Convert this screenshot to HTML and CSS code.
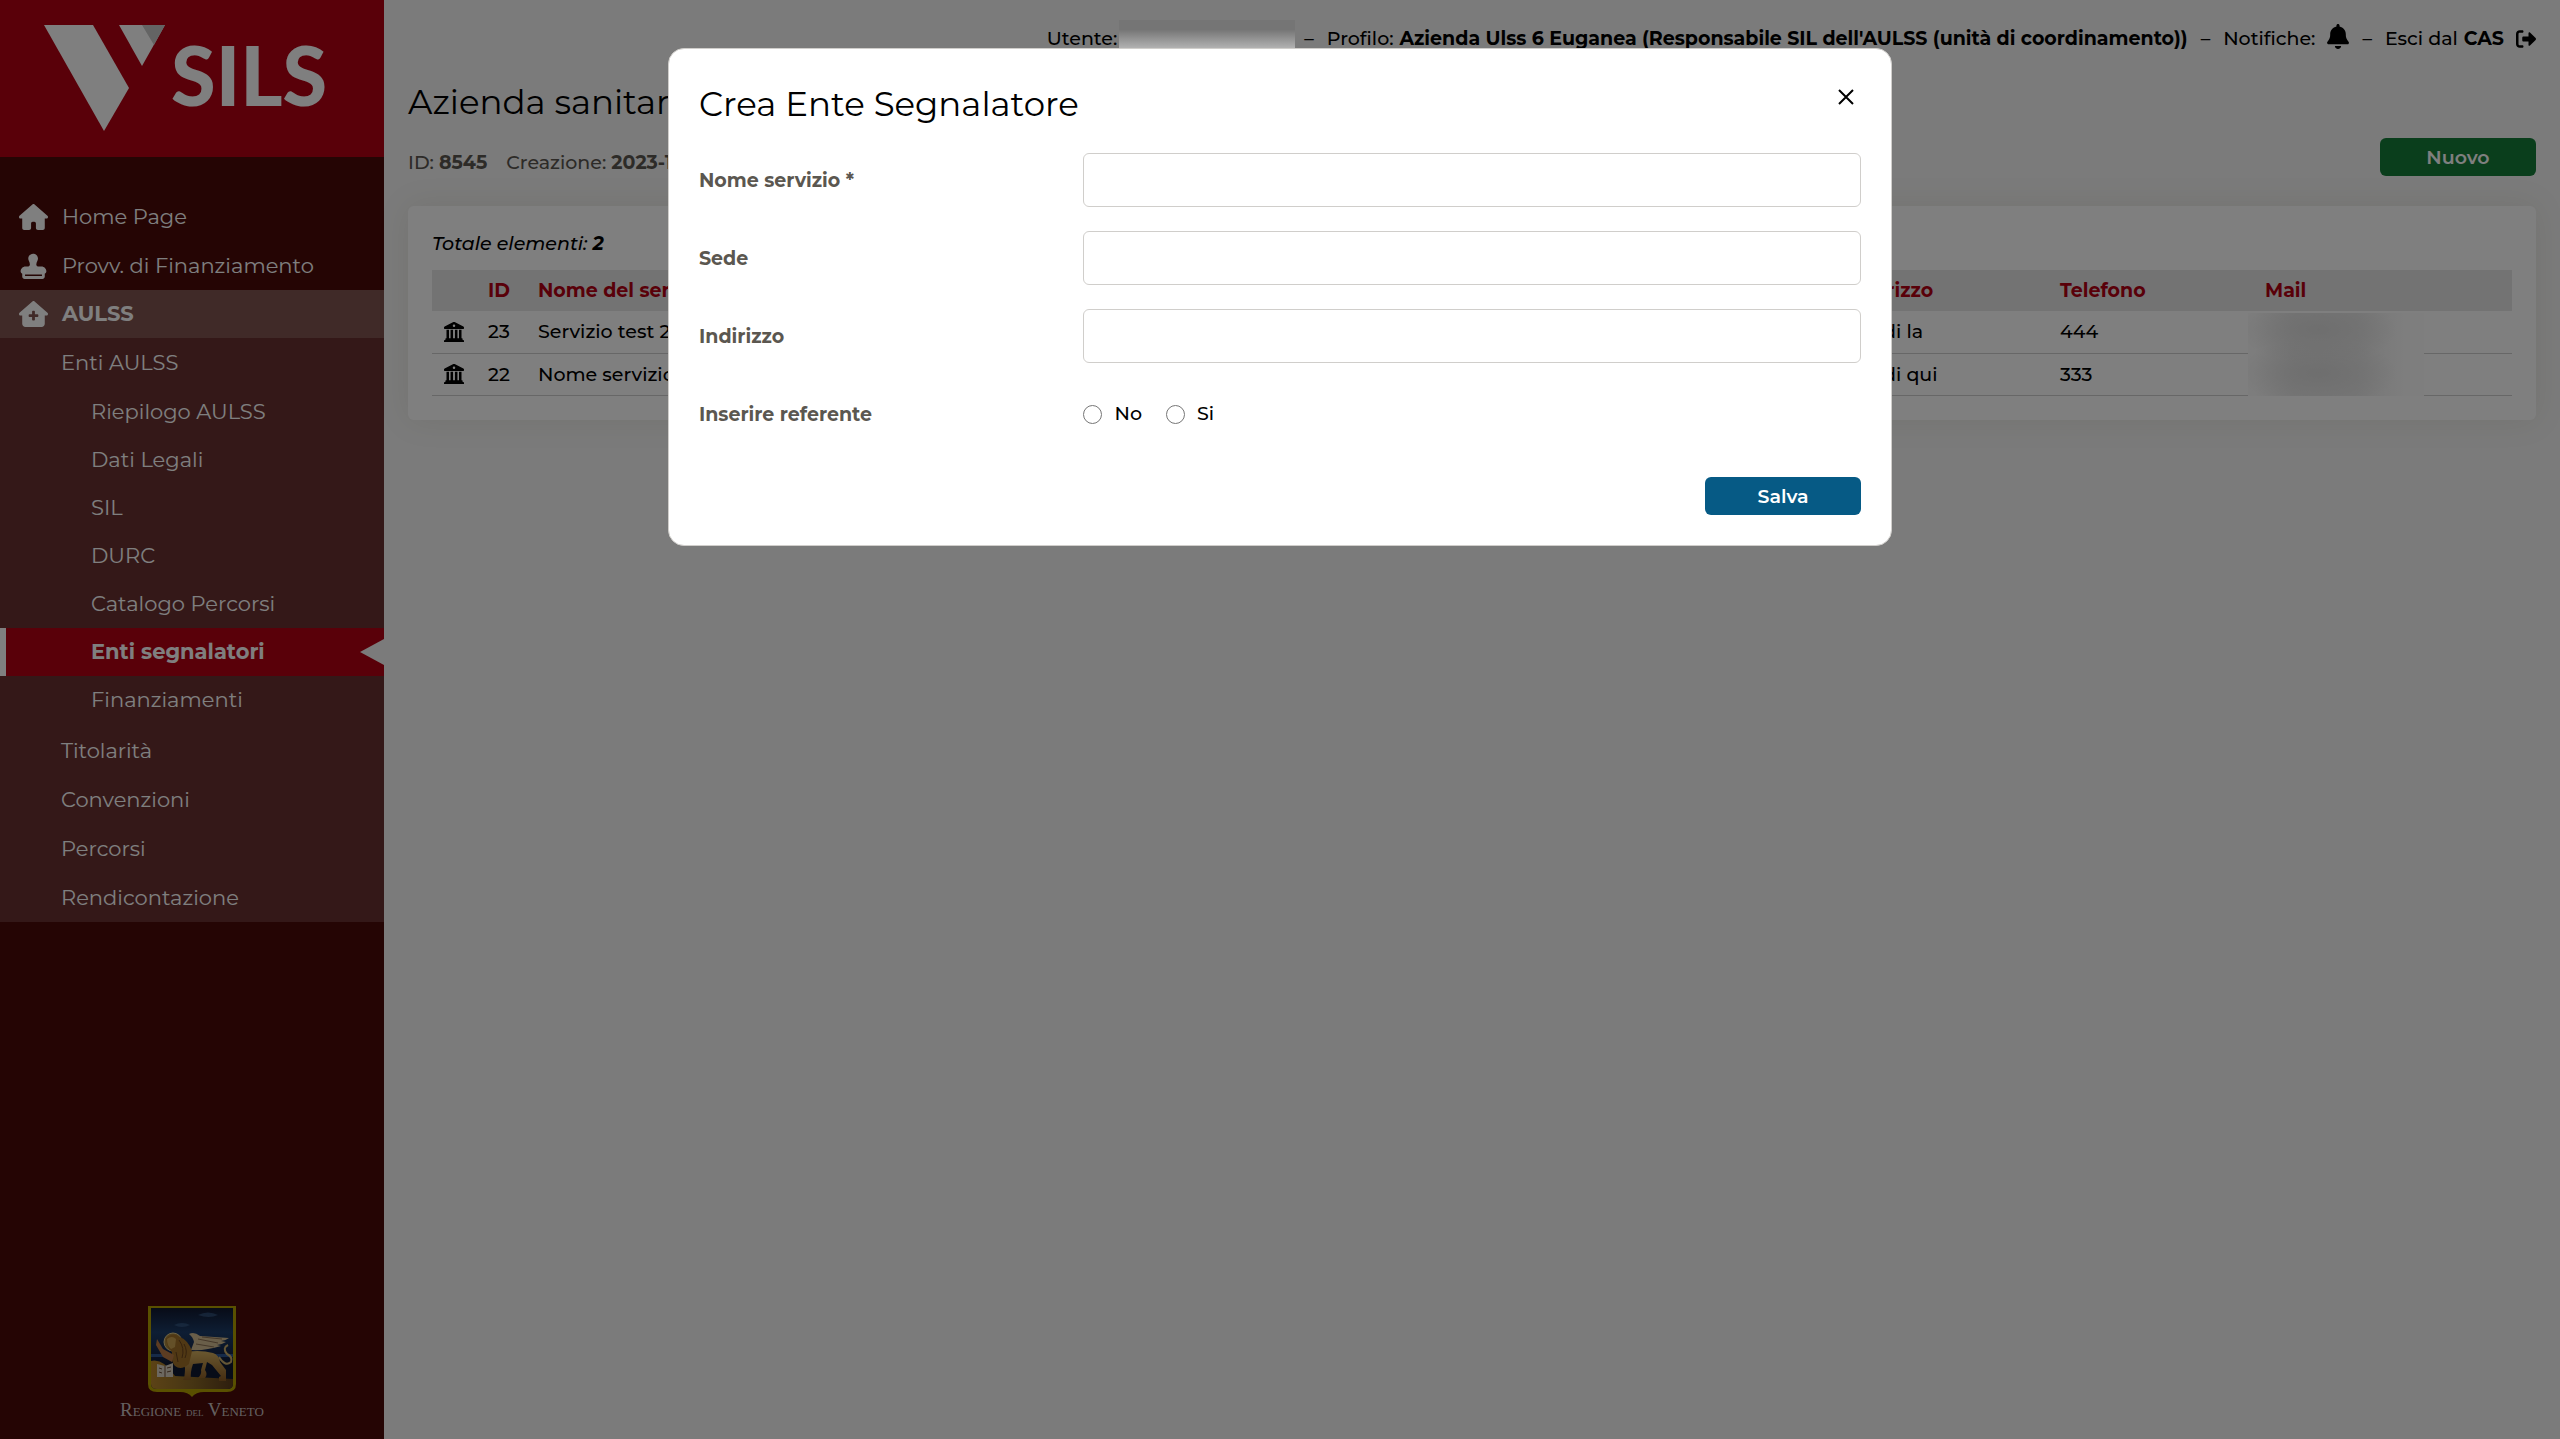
FILE: index.html
```html
<!DOCTYPE html>
<html lang="it">
<head>
    <meta charset="UTF-8">
    <meta name="viewport" content="width=device-width, initial-scale=1.0">
    <title>SILS - Enti segnalatori</title>
    <link rel="stylesheet" href="styles.css">
</head>
<body>
<div class="page">
  <aside class="sidebar">
    <a class="brand" href="#" aria-label="SILS">
      <svg class="brand-mark" viewBox="0 0 122 106" aria-hidden="true">
        <path fill="#fff" d="M0 0h49l36 63-25 43z"/>
        <path fill="#fff" d="M75 0h46L98 41z"/>
        <path fill="#c8c8c8" d="M98 0h23l-11 20z"/>
      </svg>
      <span class="brand-name">SILS</span>
    </a>

    <nav class="menu">
      <a class="menu-item" href="#">
        <svg class="menu-icon" viewBox="0 0 576 512"><path d="M575.8 255.500c0 18-15 32.100-32 32.100h-32l.7 160.200c0 2.700-.2 5.400-.5 8.100V472c0 22.100-17.900 40-40 40H376c-22.100 0-40-17.900-40-40V384c0-17.700-14.300-32-32-32h-32c-17.700 0-32 14.300-32 32v88c0 22.100-17.900 40-40 40h-97c-22 0-39-18-39-40V287.600H32c-18 0-32-14-32-32.100 0-9 3-17 10-24L266.400 8c7-7 15-8 22-8s15 2 21 7L564.800 231.500c8 7 12 15 11 24z"/></svg>
        Home Page
      </a>
      <a class="menu-item" href="#">
        <svg class="menu-icon" viewBox="0 0 576 512"><path d="M344 226c0-25 8-49 20-71a91 91 0 0 0 12-59c-5-42-38-77-80-84-59-10-112 36-112 95 0 18 5 34 13 48 12 22 19 46 19 71v6c0 16-13 32-32 32h-56C77 264 32 309 32 360c0 22 13 40 32 48v56c0 26 22 48 48 48h352c26 0 48-22 48-48v-56c19-8 32-26 32-48 0-51-45-96-96-96h-72c-19 0-32-16-32-32zM120 424h336v32H120z"/></svg>
        Provv. di Finanziamento
      </a>
      <a class="menu-item open" href="#">
        <svg class="menu-icon" viewBox="0 0 576 512"><path fill-rule="evenodd" d="M575.8 255.500c0 18-15 32.100-32 32.100h-32V448c0 35-28 64-64 64H128c-35 0-64-29-64-64V287.600H32c-18 0-32-14-32-32.100 0-9 3-17 10-24L266.400 8c7-7 15-8 22-8s15 2 21 7L564.800 231.500c8 7 12 15 11 24zM260 208v52h-52c-9 0-16 7-16 16v24c0 9 7 16 16 16h52v52c0 9 7 16 16 16h24c9 0 16-7 16-16v-52h52c9 0 16-7 16-16v-24c0-9-7-16-16-16h-52v-52c0-9-7-16-16-16h-24c-9 0-16 7-16 16z"/></svg>
        AULSS
      </a>
      <div class="submenu">
        <a class="sub-item" href="#">Enti AULSS</a>
        <div class="submenu-inner">
          <a class="inner-item" href="#">Riepilogo AULSS</a>
          <a class="inner-item" href="#">Dati Legali</a>
          <a class="inner-item" href="#">SIL</a>
          <a class="inner-item" href="#">DURC</a>
          <a class="inner-item" href="#">Catalogo Percorsi</a>
          <a class="inner-item active" href="#">Enti segnalatori</a>
          <a class="inner-item" href="#">Finanziamenti</a>
        </div>
        <a class="sub-item" href="#">Titolarità</a>
        <a class="sub-item" href="#">Convenzioni</a>
        <a class="sub-item" href="#">Percorsi</a>
        <a class="sub-item" href="#">Rendicontazione</a>
      </div>
    </nav>

    <div class="region">
      <!-- lion of St. Mark crest -->
      <svg class="crest" viewBox="0 0 88 92" aria-hidden="true">
        <defs>
          <linearGradient id="sky" x1="0" y1="0" x2="0" y2="1">
            <stop offset="0" stop-color="#10182f"/>
            <stop offset=".3" stop-color="#1c3c68"/>
            <stop offset=".58" stop-color="#142446"/>
            <stop offset=".7" stop-color="#0e1830"/>
          </linearGradient>
          <linearGradient id="ground" x1="0" y1="0" x2="1" y2="0">
            <stop offset="0" stop-color="#b8862c"/>
            <stop offset=".5" stop-color="#8c6a26"/>
            <stop offset="1" stop-color="#5c3c1c"/>
          </linearGradient>
          <linearGradient id="fur" x1="0" y1="0" x2="0" y2="1">
            <stop offset="0" stop-color="#d4b060"/>
            <stop offset="1" stop-color="#8a5a24"/>
          </linearGradient>
        </defs>
        <path fill="#b3a000" d="M0 0h88v78q0 8-9 8H56q-8 0-12 5-4-5-12-5H9q-9 0-9-8z"/>
        <path fill="url(#sky)" d="M3 2h82v76q0 5-6 5H9q-6 0-6-5z"/>
        <path fill="#3c6290" opacity=".6" d="M26 19q8-4 16 0-8 4-16 0zM50 9q10-5 20 0-9 4-20 0z"/>
        <path fill="#2c5590" d="M3 48h82v3H3z"/>
        <path fill="url(#ground)" d="M3 55q12-3 24 15l58 3v5q0 5-6 5H9q-6 0-6-5z"/>
        <path fill="#d2bc92" d="M41 28q5-3 11 2 14 1 29 2-4 3-8 3l5 1q-5 3-9 3l4 1q-16 5-30 4l3-8q-1-5-5-8z"/>
        <path fill="none" stroke="#8a6f52" d="M50 33l20 4M48 38l18 3M54 31l20 2"/>
        <circle cx="25" cy="36" r="9" fill="#a8843c" stroke="#e0c98a"/>
        <path fill="url(#fur)" d="M32 47q18-4 33 0 6 2 7 9l6 8v11h-7v-4l2-1-9-11-5-3-2 8q3 4 0 8h-7q4-4 3-8l2-7-10 1q-3 8-2 16h-8q2-3 2-12z"/>
        <path fill="#a07028" d="M18 33q6-8 14-2 8 3 12 14l-3 13q-8 7-14 2-4-4-3-14-5-4-6-13z"/>
        <path fill="#c9a050" d="M19 33q5-4 9 0l-1 8-4 2q-4-3-4-10z"/>
        <path fill="none" stroke="#6a431c" d="M31 34q6 8 3 18M36 38q4 7 1 14M28 46l2 10"/>
        <path fill="#b87844" d="M24 56l-9-5-7-12 1-6 6 10 11 6z"/>
        <path fill="none" stroke="#c9ad6c" stroke-width="2" d="M71 51q6 10 12 5 2-5-4-8-5-6 1-9"/>
        <path fill="#d8d0c0" d="M9 58l8 2 8-3v14H9z"/>
        <path fill="none" stroke="#6d4f39" d="M17 60v11M11 62l3 1M11 66l3 1M19 62l4-1M19 66l4-1"/>
      </svg>
      <span class="region-name">Regione <small>del</small> Veneto</span>
    </div>
  </aside>

  <main class="content">
    <header class="topbar">
      <span class="top-user">Utente:<span class="redacted-user"></span></span>
      <span>–</span>
      <span class="top-part">Profilo: <b>Azienda Ulss 6 Euganea (Responsabile SIL dell'AULSS (unità di coordinamento))</b></span>
      <span>–</span>
      <a class="top-part" href="#">Notifiche:
        <svg class="bell" viewBox="0 0 448 512"><path d="M224 0c-18 0-32 14-32 32v19C119 66 64 131 64 208v19c0 47-17 92-48 127l-8 9c-8 9-10 22-5 33s16 21 29 21h384c13 0 24-8 29-20s3-25-5-34l-8-9c-31-35-48-80-48-127v-19c0-77-55-142-128-157V32c0-18-14-32-32-32zm45 493c12-12 19-28 19-45H160c0 17 7 33 19 45s28 19 45 19 33-7 45-19z"/></svg>
      </a>
      <span>–</span>
      <a class="top-part" href="#">Esci dal <b>CAS</b>
        <svg class="exit" viewBox="0 0 512 448"><path d="M160 0c18 0 32 14 32 32s-14 32-32 32H96c-18 0-32 14-32 32v256c0 18 14 32 32 32h64c18 0 32 14 32 32s-14 32-32 32H96c-53 0-96-43-96-96V96C0 43 43 0 96 0zM502 201 358 57c-15-15-38-5-38 16v87H192c-18 0-32 14-32 32v64c0 18 14 32 32 32h128v87c0 21 23 31 38 16l144-144c13-13 13-33 0-46z"/></svg>
      </a>
    </header>

    <h1 class="title">Azienda sanitaria</h1>

    <div class="info">
      <p class="info-text"><span>ID: <b>8545</b></span><span>Creazione: <b>2023-11-20</b></span></p>
      <button class="btn green" type="button">Nuovo</button>
    </div>

    <section class="card">
      <p class="total">Totale elementi: <b>2</b></p>
      <table class="list">
        <colgroup>
          <col class="col-icon"><col class="col-id"><col><col class="col-address"><col class="col-phone"><col class="col-mail">
        </colgroup>
        <thead>
          <tr><th></th><th>ID</th><th>Nome del servizio</th><th>Indirizzo</th><th>Telefono</th><th>Mail</th></tr>
        </thead>
        <tbody>
          <tr>
            <td><svg class="bank" viewBox="0 0 512 512"><path fill-rule="evenodd" d="M240 3a32 32 0 0 1 32 0l224 112c12 6 16 14 16 26v19c0 9-7 16-16 16H16c-9 0-16-7-16-16v-19c0-12 6-20 16-26zM256 64a32 32 0 1 0 0 64 32 32 0 0 0 0-64zM64 200h64v216h40V200h64v216h48V200h64v216h40V200h64v216h24v32l40 28v36H0v-36l40-28v-32h24z"/></svg></td>
            <td>23</td><td>Servizio test 2</td><td>Via di la</td><td>444</td>
            <td class="mail"><span class="redacted-mail"></span></td>
          </tr>
          <tr>
            <td><svg class="bank" viewBox="0 0 512 512"><path fill-rule="evenodd" d="M240 3a32 32 0 0 1 32 0l224 112c12 6 16 14 16 26v19c0 9-7 16-16 16H16c-9 0-16-7-16-16v-19c0-12 6-20 16-26zM256 64a32 32 0 1 0 0 64 32 32 0 0 0 0-64zM64 200h64v216h40V200h64v216h48V200h64v216h40V200h64v216h24v32l40 28v36H0v-36l40-28v-32h24z"/></svg></td>
            <td>22</td><td>Nome servizio</td><td>Via di qui</td><td>333</td><td></td>
          </tr>
        </tbody>
      </table>
    </section>
  </main>
</div>

<div class="overlay"></div>

<form class="modal" role="dialog" aria-labelledby="modal-title">
  <div class="modal-head">
    <h2 class="title" id="modal-title">Crea Ente Segnalatore</h2>
    <button class="close" type="button" aria-label="Chiudi">
      <svg viewBox="0 0 16 16"><path d="M1 1l14 14M15 1L1 15"/></svg>
    </button>
  </div>

  <div class="field">
    <label for="nome">Nome servizio *</label>
    <input type="text" id="nome" required>
  </div>
  <div class="field">
    <label for="sede">Sede</label>
    <input type="text" id="sede">
  </div>
  <div class="field">
    <label for="indirizzo">Indirizzo</label>
    <input type="text" id="indirizzo">
  </div>
  <div class="field" role="radiogroup" aria-labelledby="ref-label">
    <span class="field-label" id="ref-label">Inserire referente</span>
    <div class="radios">
      <label class="radio"><input type="radio" name="referente" value="no">No</label>
      <label class="radio"><input type="radio" name="referente" value="si">Si</label>
    </div>
  </div>

  <div class="modal-foot">
    <button class="btn blue" type="button">Salva</button>
  </div>
</form>
</body>
</html>
```

FILE: styles.css
```css
* {
  box-sizing: border-box;
}

body {
  margin: 0;
  background-color: #f6f6f6;
  color: #000;
  font-family: Montserrat, Inter, sans-serif;
  font-size: 19px;
  font-weight: 500;
  line-height: 28px;
}

a {
  color: inherit;
  text-decoration: none;
}

b {
  font-weight: 700;
}

.page {
  display: flex;
  min-height: 100vh;
}

/* sidebar */
.sidebar {
  display: flex;
  flex-direction: column;
  width: 15%;
  background-color: #4a0a08;
  color: #fff;
}

.brand {
  display: flex;
  gap: 5px;
  height: 157px;
  padding: 25px 44px;
  background-color: #b30012;
}

.brand-mark {
  width: 122px;
  height: 106px;
}

.brand-name {
  font-family: Lato, sans-serif;
  font-size: 81px;
  font-weight: 900;
  line-height: 100px;
}

.menu {
  padding-top: 35px;
  font-size: 21px;
  font-weight: 400;
}

.menu-item,
.sub-item,
.inner-item {
  display: flex;
  align-items: center;
  height: 49px;
}

.menu-item {
  gap: 14px;
  padding-left: 19px;
}

.menu-icon {
  width: 29px;
  height: 26px;
  fill: #fff;
}

.open {
  height: 48px;
  background-color: #805450;
  font-weight: 700;
}

.submenu {
  background-color: #683030;
}

.sub-item {
  padding-left: 61px;
}

.submenu-inner {
  padding: 1px 0 2px;
}

.inner-item {
  height: 48px;
  padding-left: 91px;
}

.active {
  justify-content: space-between;
  border-left: 6px solid #fff;
  padding-left: 85px;
  background-color: #b30012;
  font-weight: 700;
}

.active::after {
  content: "";
  border: 13px solid transparent;
  border-left: 0;
  border-right: 24px solid #f6f6f6;
}

.region {
  display: flex;
  flex-direction: column;
  align-items: center;
  margin-top: auto;
  padding-bottom: 15px;
}

.crest {
  width: 88px;
  height: 92px;
}

.region-name {
  color: #c8c0c0;
  font-family: "Liberation Serif", serif;
  font-size: 19px;
  font-variant: small-caps;
  font-weight: 400;
  line-height: 24px;
}

.region-name small {
  font-size: 13px;
}

/* content */
.content {
  flex: 1;
  padding: 24px;
}

.topbar {
  display: flex;
  justify-content: flex-end;
  align-items: center;
  gap: 13px;
  height: 30px;
}

.top-part,
.top-user {
  display: flex;
  align-items: center;
  gap: 6px;
}

.top-user {
  gap: 2px;
}

.redacted-user {
  position: relative;
  z-index: 15;
  width: 176px;
  height: 32px;
  margin: 0 -4px 6px 0;
  background: linear-gradient(#757575 30%, #b4b4b4 90%);
}

.bell {
  width: 22px;
  height: 25px;
  margin: 0 0 5px 6px;
}

.exit {
  width: 20px;
  height: 18px;
  margin-left: 6px;
}

.title {
  margin: 0;
  font-size: 34px;
  font-weight: 400;
  line-height: 40px;
}

.content .title {
  margin-top: 28px;
}

.info {
  display: flex;
  justify-content: space-between;
  align-items: center;
  margin-top: 16px;
  height: 38px;
}

.info-text {
  display: flex;
  gap: 19px;
  margin: 0;
  padding-top: 12px;
  color: #5b5750;
}

.btn {
  width: 156px;
  height: 38px;
  border: 0;
  border-radius: 6px;
  color: #fff;
  font-family: inherit;
  font-size: 19px;
  font-weight: 600;
  cursor: pointer;
}

.green {
  background-color: #147c38;
}

.blue {
  background-color: #065a85;
}

.card {
  margin-top: 30px;
  padding: 24px;
  border-radius: 6px;
  background-color: #fff;
  box-shadow: 0 0 32px rgba(100, 90, 30, 0.1);
}

.total {
  margin: 0 0 12px;
  font-style: italic;
}

.list {
  width: 100%;
  border-collapse: collapse;
  table-layout: fixed;
}

.list th,
.list td {
  height: 42px;
  padding: 1px 10px 0;
  text-align: left;
}

.list th {
  height: 41px;
  background-color: #e6e6e6;
  color: #b30012;
  font-weight: 700;
}

.list td {
  border-bottom: 1px solid #cfcfcf;
}

.list td:first-child {
  padding: 0 0 0 12px;
}

.col-icon {
  width: 46px;
}

.col-id {
  width: 50px;
}

.col-address {
  width: 212px;
}

.col-phone {
  width: 205px;
}

.col-mail {
  width: 257px;
}

.bank {
  display: block;
  width: 20px;
  height: 20px;
}

.mail {
  position: relative;
}

.redacted-mail {
  position: absolute;
  top: 2px;
  left: -7px;
  width: 176px;
  height: 83px;
  background:
    radial-gradient(ellipse 78px 34px at 40% 20%, #dadadad0, #e4e4e400),
    radial-gradient(ellipse 78px 34px at 40% 72%, #dadadad0, #e4e4e400),
    linear-gradient(90deg, #fafafa 4%, #ececec 26%, #ececec 62%, #fdfdfd 90%);
}

/* modal */
.overlay {
  position: fixed;
  inset: 0;
  z-index: 10;
  background-color: rgba(0, 0, 0, 0.5);
}

.modal {
  position: absolute;
  top: 48px;
  left: 50%;
  z-index: 20;
  display: flex;
  flex-direction: column;
  gap: 24px;
  width: 1224px;
  max-width: 100%;
  padding: 35px 30px 30px;
  border: 1px solid #d0cecb;
  border-radius: 16px;
  background-color: #fff;
  transform: translateX(-50%);
}

.modal-head {
  display: flex;
  justify-content: space-between;
  align-items: flex-start;
  height: 45px;
}

.close {
  padding: 5px 7px;
  border: 0;
  background: none;
  cursor: pointer;
}

.close svg {
  display: block;
  width: 16px;
  height: 16px;
  stroke: #000;
  stroke-width: 2;
}

.field {
  display: grid;
  grid-template-columns: 33% 1fr;
  align-items: center;
  gap: 1px;
  min-height: 54px;
}

.field > label,
.field-label {
  padding-top: 1px;
  color: #5b5750;
  font-weight: 700;
}

.field input[type="text"] {
  width: 100%;
  height: 54px;
  padding: 0 12px;
  border: 1px solid #d0cecb;
  border-radius: 6px;
  font: inherit;
}

.radios {
  display: flex;
  gap: 24px;
}

.radio {
  display: flex;
  align-items: center;
  gap: 12px;
}

.radio input {
  width: 19px;
  height: 19px;
  margin: 0;
}

.modal-foot {
  display: flex;
  justify-content: flex-end;
  padding-top: 12px;
}
```
